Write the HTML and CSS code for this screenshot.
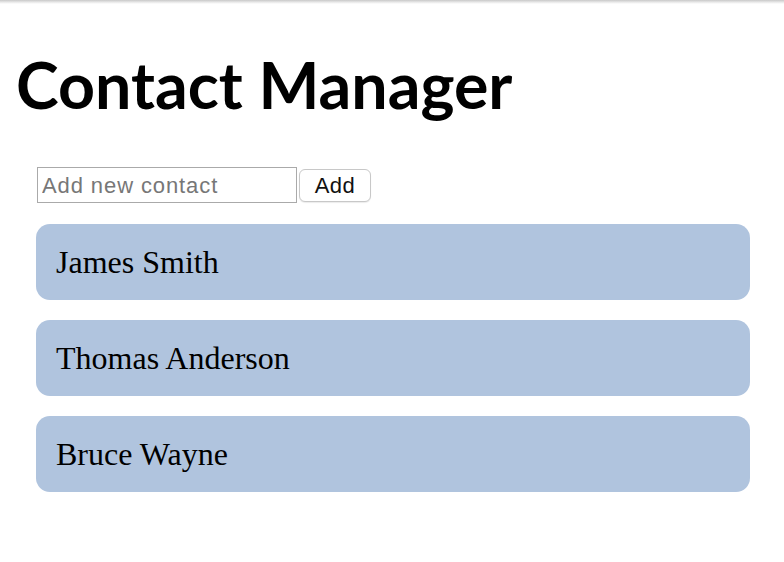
FILE: index.html
```html
<!DOCTYPE html>
<html>
<head>
<meta charset="utf-8">
<link rel="stylesheet" href="styles.css">
</head>
<body>
<div class="topbar"></div>
<main class="app">
  <h1 class="title">Contact Manager</h1>
  <div class="section">
    <form class="add-form">
      <input class="add-input" type="text" placeholder="Add new contact">
      <button class="add-btn" type="button">Add</button>
    </form>
    <ul class="contacts">
      <li class="contact">James Smith</li>
      <li class="contact">Thomas Anderson</li>
      <li class="contact">Bruce Wayne</li>
    </ul>
  </div>
</main>
</body>
</html>
```
FILE: styles.css
```css
html, body {
  margin: 0;
  padding: 0;
  background: #fff;
}
.topbar {
  height: 4px;
  background: linear-gradient(#c8c8c8, #e6e6e6 50%, #fff);
}
.app {
  padding: 0 0 0 16px;
}
.title {
  font-family: Lato, sans-serif;
  font-weight: 700;
  font-size: 64.5px;
  line-height: 80px;
  margin: 40px 0 0 0;
  color: #000;
}
.section {
  padding: 0 34px 0 20px;
}
.add-form {
  display: flex;
  align-items: center;
  gap: 2px;
  margin: 43px 0 0 1px;
}
.add-input {
  width: 260px;
  height: 36px;
  box-sizing: border-box;
  border: 1px solid #aaa;
  padding: 2px 4px 0;
  font-family: "Liberation Sans", Arial, sans-serif;
  font-size: 22px;
  letter-spacing: 0.9px;
  color: #333;
  outline: none;
}
.add-input::placeholder {
  color: #777;
}
.add-btn {
  width: 72px;
  height: 33px;
  box-sizing: border-box;
  border: 1px solid #c8c8c8;
  border-radius: 6px;
  background: #fff;
  font-family: "Liberation Sans", Arial, sans-serif;
  font-size: 22px;
  letter-spacing: 0.5px;
  color: #111;
  padding: 2px 0 0;
  box-shadow: 0 1px 1px rgba(0,0,0,0.08);
}
.contacts {
  list-style: none;
  margin: 21px 0 0 0;
  padding: 0;
  display: flex;
  flex-direction: column;
  gap: 20px;
}
.contact {
  background: #b0c4de;
  border-radius: 14px;
  height: 76px;
  box-sizing: border-box;
  padding: 0 20px;
  display: flex;
  align-items: center;
  font-family: "Liberation Serif", "Times New Roman", serif;
  font-size: 32px;
  color: #000;
}
```
